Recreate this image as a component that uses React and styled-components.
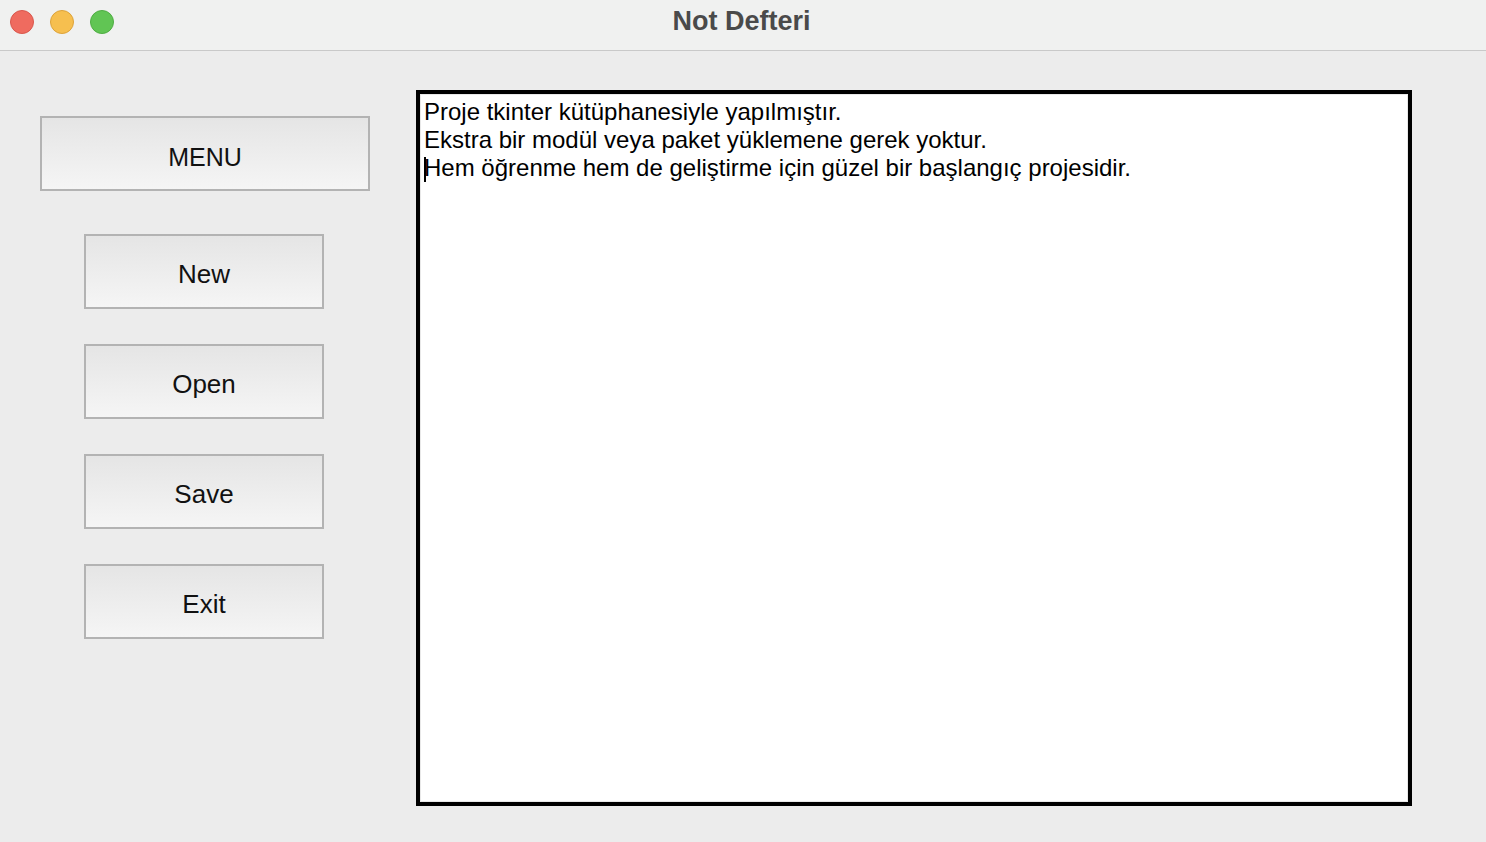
import React from "react";
import styled, { createGlobalStyle } from "styled-components";

const Global = createGlobalStyle`
  html, body {
    margin: 0;
    padding: 0;
    background: #ececec;
    font-family: "Liberation Sans", Arial, sans-serif;
  }
`;

const Window = styled.div`
  width: 1486px;
  height: 842px;
  display: flex;
  flex-direction: column;
  background: #ececec;
  overflow: hidden;
`;

const TitleBar = styled.div`
  height: 50px;
  flex-shrink: 0;
  position: relative;
  display: flex;
  align-items: center;
  justify-content: center;
  background: #f0f1f0;
  border-bottom: 1px solid #c9c9c9;
`;

const Lights = styled.div`
  position: absolute;
  left: 10px;
  top: 10px;
  display: flex;
  gap: 16px;
`;

const Light = styled.span`
  width: 24px;
  height: 24px;
  border-radius: 50%;
  box-sizing: border-box;
  background: ${(p) => p.color};
  border: 1px solid ${(p) => p.edge};
`;

const Title = styled.div`
  font-family: "Liberation Sans", Arial, sans-serif;
  font-weight: 700;
  font-size: 27px;
  color: #4a4a4a;
  margin-top: -8px;
  margin-left: -3px;
`;

const Body = styled.div`
  flex: 1;
  display: flex;
  align-items: flex-start;
  padding: 39px 0 0 40px;
  gap: 46px;
`;

const SidePanel = styled.div`
  width: 330px;
  display: flex;
  flex-direction: column;
  align-items: center;
  padding-top: 26px;
  gap: 35px;
`;

const Button = styled.div`
  box-sizing: border-box;
  width: ${(p) => (p.wide ? "330px" : "240px")};
  height: 75px;
  margin-bottom: ${(p) => (p.wide ? "8px" : "0")};
  display: flex;
  align-items: center;
  justify-content: center;
  border: 2px solid #b3b3b3;
  background: linear-gradient(#e5e5e5, #f5f5f5);
  font-size: ${(p) => (p.wide ? "25px" : "26px")};
  color: #111;
  padding-top: ${(p) => (p.wide ? "8px" : "6px")};
  align-self: ${(p) => (p.wide ? "stretch" : "center")};
  margin-right: ${(p) => (p.wide ? "0" : "2px")};
`;

const Editor = styled.div`
  box-sizing: border-box;
  width: 996px;
  height: 716px;
  background: #fff;
  border: 4px solid #000;
  box-shadow: inset 0 0 0 1px #e8e8e8;
  padding: 4px 4px;
  font-size: 24px;
  line-height: 28px;
  color: #000;
  position: relative;
`;

const Line = styled.div`
  white-space: pre;
`;

const Caret = styled.span`
  display: inline-block;
  width: 2px;
  height: 25px;
  background: #000;
  vertical-align: -6px;
  margin-right: -2px;
`;

const lines = [
  "Proje tkinter kütüphanesiyle yapılmıştır.",
  "Ekstra bir modül veya paket yüklemene gerek yoktur.",
];

export default function App() {
  return (
    <Window>
      <Global />
      <TitleBar>
        <Lights>
          <Light color="#ef6b5f" edge="#d9574c" />
          <Light color="#f6bf4f" edge="#dda33a" />
          <Light color="#61c554" edge="#4fad43" />
        </Lights>
        <Title>Not Defteri</Title>
      </TitleBar>
      <Body>
        <SidePanel>
          <Button wide>MENU</Button>
          <Button>New</Button>
          <Button>Open</Button>
          <Button>Save</Button>
          <Button>Exit</Button>
        </SidePanel>
        <Editor>
          {lines.map((l) => (
            <Line key={l}>{l}</Line>
          ))}
          <Line>
            <Caret />
            Hem öğrenme hem de geliştirme için güzel bir başlangıç projesidir.
          </Line>
        </Editor>
      </Body>
    </Window>
  );
}
